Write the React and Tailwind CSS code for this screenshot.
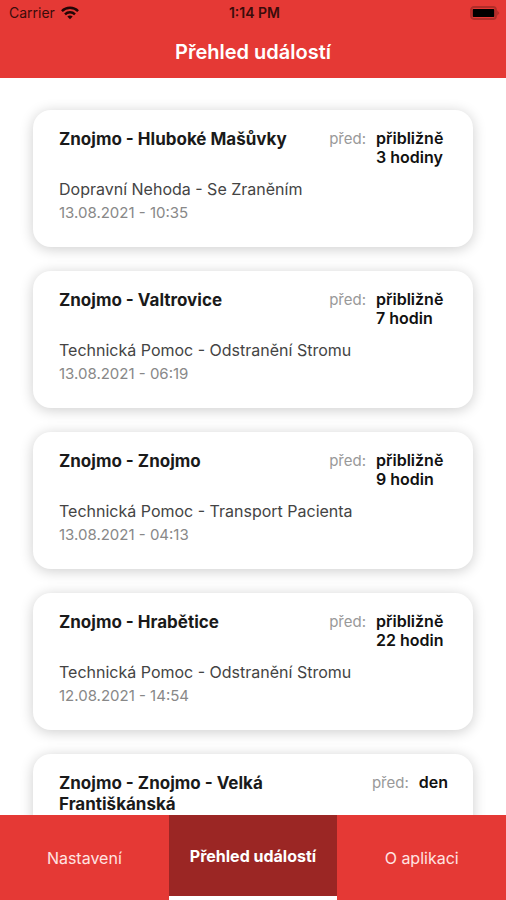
const events = [
  { place: 'Znojmo - Hluboké Mašůvky', ago: 'přibližně 3 hodiny', kind: 'Dopravní Nehoda - Se Zraněním', date: '13.08.2021 - 10:35' },
  { place: 'Znojmo - Valtrovice', ago: 'přibližně 7 hodin', kind: 'Technická Pomoc - Odstranění Stromu', date: '13.08.2021 - 06:19' },
  { place: 'Znojmo - Znojmo', ago: 'přibližně 9 hodin', kind: 'Technická Pomoc - Transport Pacienta', date: '13.08.2021 - 04:13' },
  { place: 'Znojmo - Hrabětice', ago: 'přibližně 22 hodin', kind: 'Technická Pomoc - Odstranění Stromu', date: '12.08.2021 - 14:54' },
  { place: 'Znojmo - Znojmo - Velká Františkánská', ago: 'den' },
];

function WifiIcon() {
  return (
    <svg className="h-[14px] w-[18px]" viewBox="0 0 18 14" fill="none" stroke="#220606" strokeWidth="2.4" aria-hidden="true">
      <path d="M0.9 5.1C5.3 0.7 12.7 0.7 17.1 5.1" />
      <path d="M4 8.3C6.8 5.5 11.2 5.5 14 8.3" />
      <path d="M9 13.2L6.3 10.5C7.8 9.1 10.2 9.1 11.7 10.5Z" fill="#220606" stroke="none" />
    </svg>
  );
}

function BatteryIcon() {
  return (
    <svg className="h-[14px] w-[30px]" viewBox="0 0 30 14" aria-hidden="true">
      <rect x="1" y="1" width="25" height="12" rx="3" fill="none" stroke="#b02d29" strokeWidth="1.8" />
      <rect x="2.7" y="3" width="21.6" height="8" rx="0.8" fill="#000" />
      <path d="M27.2 4.2L29.4 7L27.2 9.8Z" fill="#b02d29" />
    </svg>
  );
}

function EventCard({ place, ago, kind, date }) {
  return (
    <article className="shrink-0 rounded-[18px] bg-white pt-[19px] pr-[25px] pb-[22px] pl-[26px] shadow-[0_2px_14px_rgba(0,0,0,0.2)]">
      <div className="flex min-h-[38px] items-start justify-between gap-4">
        <h2 className="text-[17px] leading-[21px] font-bold text-[#1a1a1a]">{place}</h2>
        <p className="flex shrink-0 gap-[10px] text-[15px] leading-[19px]">
          <span className="text-[#999]">před:</span>
          <strong className="max-w-[72px] text-base leading-[19px] font-semibold text-[#111]">{ago}</strong>
        </p>
      </div>
      {kind && <p className="mt-[10px] text-base leading-6 text-[#444]">{kind}</p>}
      {date && <p className="text-[15px] leading-6 text-[#888]">{date}</p>}
    </article>
  );
}

export default function App() {
  return (
    <div className="flex h-screen flex-col overflow-hidden bg-white font-['Inter','Liberation_Sans',sans-serif]">
      <header className="shrink-0 bg-[#e53935]">
        <div className="grid h-[26px] grid-cols-3 items-center pr-[6px] pl-[9px] text-sm text-[#3a0c0b]">
          <div className="flex items-center gap-[6px]">
            Carrier
            <WifiIcon />
          </div>
          <div className="text-center font-semibold">1:14 PM</div>
          <div className="flex justify-end">
            <BatteryIcon />
          </div>
        </div>
        <h1 className="h-[52px] text-center text-[20px] leading-[52px] font-semibold text-white">Přehled událostí</h1>
      </header>
      <main className="flex min-h-0 flex-1 flex-col gap-6 overflow-y-auto px-[33px] pt-8 [scrollbar-width:none]">
        {events.map((event) => (
          <EventCard key={event.place} {...event} />
        ))}
      </main>
      <nav className="z-10 grid h-[85px] shrink-0 grid-cols-3 bg-[#e53935] text-base text-[#ffe4e2]">
        <button type="button">Nastavení</button>
        <button type="button" aria-current="page" className="border-b-4 border-white bg-[#9b2624] font-bold text-white">
          Přehled událostí
        </button>
        <button type="button">O aplikaci</button>
      </nav>
    </div>
  );
}
